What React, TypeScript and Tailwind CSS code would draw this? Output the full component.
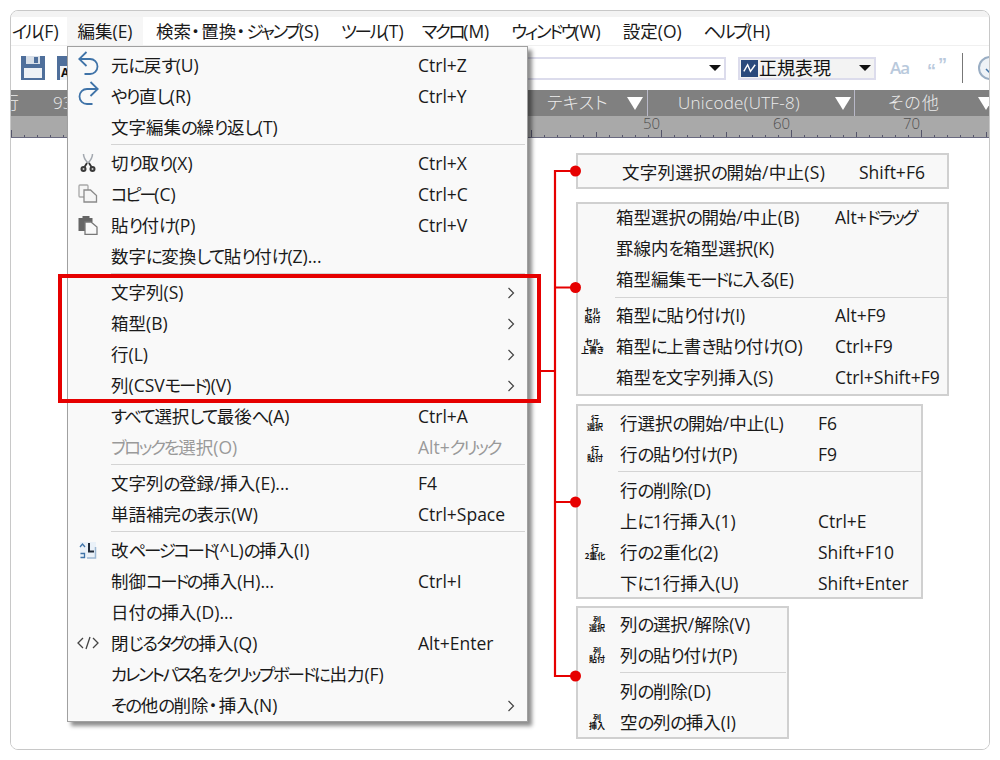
import React from "react";

const FONT = "[font-family:'Open_Sans','Noto_Sans_CJK_JP',sans-serif] [font-feature-settings:'palt']";

/* Hiragana and katakana set narrower than kanji, as in the reference's UI font */
function Txt({ s }: { s: string }) {
  const parts = s.split(/([\u3041-\u3096]+|[\u30a1-\u30fa\u30fc]+|・)/);
  return (
    <>
      {parts.map((p, i) => {
        if (!p) return null;
        if (p === "・") return <span key={i} className="tracking-[1.5px]">{p}</span>;
        if (/^[\u3041-\u3096]/.test(p)) return <span key={i} className="tracking-[-1.5px]">{p}</span>;
        if (/^[\u30a1-\u30fa\u30fc]/.test(p)) return <span key={i} className="tracking-[-2.300px]">{p}</span>;
        return <span key={i}>{p}</span>;
      })}
    </>
  );
}

function Undo({ flip }: { flip?: boolean }) {
  return (
    <svg width="21" height="24" viewBox="0 0 21 24" fill="none" stroke="#3f73a8" strokeWidth="1.800" className="-translate-y-[2px]" style={flip ? { transform: "scaleX(-1) translateY(-1px)" } : undefined}>
      <path d="M8.500 1 1.200 8l7.300 7" />
      <path d="M1.200 8H12a7.500 7.500 0 0 1 0 15H6.500" />
    </svg>
  );
}
function Scissors() {
  return (
    <svg width="18" height="20" viewBox="0 0 18 20" fill="none">
      <path d="M4.500 1c0 4 2.500 7 4.500 9M13.500 1c0 4-2.500 7-4.500 9" stroke="#a4a9b0" strokeWidth="1.500" />
      <path d="M8 10 5.500 14M10 10l2.500 4" stroke="#333" strokeWidth="1.800" />
      <circle cx="4.500" cy="16" r="3" fill="#3a3a3a" />
      <circle cx="13.500" cy="16" r="3" fill="#3a3a3a" />
      <circle cx="4.500" cy="16" r="1" fill="#ccc" />
      <circle cx="13.500" cy="16" r="1" fill="#ccc" />
    </svg>
  );
}
function Copy() {
  return (
    <svg width="20" height="19" viewBox="0 0 20 19" fill="#f5f5f5" stroke="#a8a8a8" strokeWidth="1.300">
      <path d="M1 2a1 1 0 0 1 1-1h7a1 1 0 0 1 1 1v10a1 1 0 0 1-1 1H2a1 1 0 0 1-1-1z" />
      <path d="M6 6h6.500l6 5.500v6.500H6z" stroke="#8a8a8a" />
    </svg>
  );
}
function Paste() {
  return (
    <svg width="20" height="20" viewBox="0 0 20 20">
      <path d="M0.500 3h4V1h7v2h3v4H8v9H0.500z" fill="#666" />
      <path d="M7 7h6l6 5v7.500H7z" fill="#f8f8f8" stroke="#777" strokeWidth="1.300" />
    </svg>
  );
}
function PageBreak() {
  return (
    <svg width="18" height="18" viewBox="0 0 18 18" fill="none">
      <path d="M1 1h16v16H1z" fill="#eaf1f8" />
      <path d="M1 6 3.500 3 6 6" stroke="#3f73a8" strokeWidth="1.300" />
      <path d="M10 2v8.500h5" stroke="#1f2937" strokeWidth="2" />
      <path d="M1.500 12.500h4v4h-4" stroke="#3f73a8" strokeWidth="1.300" />
      <path d="M16.500 6v11H8" stroke="#9db8d3" strokeWidth="1.500" />
    </svg>
  );
}
function Tag() {
  return (
    <svg width="22" height="14" viewBox="0 0 22 14" fill="none" stroke="#444" strokeWidth="1.300">
      <path d="M6 2 1 7l5 5M16 2l5 5-5 5M13 1 9 13" />
    </svg>
  );
}
function Chevron() {
  return (
    <svg width="8" height="12" viewBox="0 0 8 12" fill="none" stroke="#444" strokeWidth="1.200">
      <path d="m1.500 1 5 5-5 5" />
    </svg>
  );
}
function Mini({ s }: { s: string }) {
  return (
    <div className="whitespace-pre-line text-center text-[8px] leading-[8px] font-bold text-[#111] [font-family:'Noto_Sans_CJK_JP',sans-serif]">
      {s}
    </div>
  );
}

type Item = { t?: string; k?: string; icon?: React.ReactNode; sub?: boolean; off?: boolean; sep?: boolean };

const menu: Item[] = [
  { t: "元に戻す(U)", k: "Ctrl+Z", icon: <Undo /> },
  { t: "やり直し(R)", k: "Ctrl+Y", icon: <Undo flip /> },
  { t: "文字編集の繰り返し(T)" },
  { sep: true },
  { t: "切り取り(X)", k: "Ctrl+X", icon: <Scissors /> },
  { t: "コピー(C)", k: "Ctrl+C", icon: <Copy /> },
  { t: "貼り付け(P)", k: "Ctrl+V", icon: <Paste /> },
  { t: "数字に変換して貼り付け(Z)..." },
  { sep: true },
  { t: "文字列(S)", sub: true },
  { t: "箱型(B)", sub: true },
  { t: "行(L)", sub: true },
  { t: "列(CSVモード)(V)", sub: true },
  { t: "すべて選択して最後へ(A)", k: "Ctrl+A" },
  { t: "ブロックを選択(O)", k: "Alt+クリック", off: true },
  { sep: true },
  { t: "文字列の登録/挿入(E)...", k: "F4" },
  { t: "単語補完の表示(W)", k: "Ctrl+Space" },
  { sep: true },
  { t: "改ページコード(^L)の挿入(I)", icon: <PageBreak /> },
  { t: "制御コードの挿入(H)...", k: "Ctrl+I" },
  { t: "日付の挿入(D)..." },
  { t: "閉じるタグの挿入(Q)", k: "Alt+Enter", icon: <Tag /> },
  { t: "カレントパス名をクリップボードに出力(F)" },
  { t: "その他の削除・挿入(N)", sub: true },
];

const p1: Item[] = [{ t: "文字列選択の開始/中止(S)", k: "Shift+F6" }];
const p2: Item[] = [
  { t: "箱型選択の開始/中止(B)", k: "Alt+ドラッグ" },
  { t: "罫線内を箱型選択(K)" },
  { t: "箱型編集モードに入る(E)" },
  { sep: true },
  { t: "箱型に貼り付け(I)", k: "Alt+F9", icon: <Mini s={"セル\n貼付"} /> },
  { t: "箱型に上書き貼り付け(O)", k: "Ctrl+F9", icon: <Mini s={"セル\n上書き"} /> },
  { t: "箱型を文字列挿入(S)", k: "Ctrl+Shift+F9" },
];
const p3: Item[] = [
  { t: "行選択の開始/中止(L)", k: "F6", icon: <Mini s={"行\n選択"} /> },
  { t: "行の貼り付け(P)", k: "F9", icon: <Mini s={"行\n貼付"} /> },
  { sep: true },
  { t: "行の削除(D)" },
  { t: "上に1行挿入(1)", k: "Ctrl+E" },
  { t: "行の2重化(2)", k: "Shift+F10", icon: <Mini s={"行\n2重化"} /> },
  { t: "下に1行挿入(U)", k: "Shift+Enter" },
];
const p4: Item[] = [
  { t: "列の選択/解除(V)", icon: <Mini s={"列\n選択"} /> },
  { t: "列の貼り付け(P)", icon: <Mini s={"列\n貼付"} /> },
  { sep: true },
  { t: "列の削除(D)" },
  { t: "空の列の挿入(I)", icon: <Mini s={"列\n挿入"} /> },
];

function Rows({ items, gutter, label, sepClass }: { items: Item[]; gutter: string; label: string; sepClass: string }) {
  return (
    <>
      {items.map((it, i) =>
        it.sep ? (
          <div key={i} className={"h-[5px] " + sepClass}>
            <div className="h-px w-full bg-[#d4d4d4]" />
          </div>
        ) : (
          <div key={i} className={"h-[31px] flex items-center text-[17.500px] whitespace-nowrap " + (it.off ? "text-[#9a9a9a]" : "text-[#1a1a1a]")}>
            <div className={"shrink-0 flex items-center justify-center -translate-y-px " + gutter}>{it.icon}</div>
            <div className={"shrink-0 " + label}>
              <Txt s={it.t ?? ""} />
            </div>
            <div className="flex-1">{it.k && <Txt s={it.k} />}</div>
            {it.sub && (
              <div className="w-[20px] shrink-0 flex">
                <Chevron />
              </div>
            )}
          </div>
        )
      )}
    </>
  );
}

function Caret() {
  return <div className="w-0 h-0 border-x-[6px] border-x-transparent border-t-[6px] border-t-[#111]" />;
}
function HeadTri() {
  return <div className="w-0 h-0 border-x-[8.500px] border-x-transparent border-t-[13px] border-t-white" />;
}

function Ruler() {
  const ticks = [];
  for (let x = 0; x < 980; x += 13) {
    const n = Math.round(x / 13);
    const h = n % 10 === 0 ? 7 : n % 5 === 0 ? 5 : 2;
    ticks.push(<line key={x} x1={x + 0.5} x2={x + 0.5} y1={21 - h} y2={21} stroke="#55556a" />);
  }
  return (
    <svg width="978" height="22" className="block">
      {ticks}
      <line x1="0" x2="978" y1="21.500" y2="21.500" stroke="#6a6a80" />
    </svg>
  );
}

export default function App() {
  return (
    <div className={"relative w-[1000px] h-[760px] bg-white overflow-hidden " + FONT}>
      <div className="pt-[10px] px-[10px]">
        <div className="h-[740px] rounded-[8px] border border-[#c8c8c8] overflow-hidden flex flex-col">
          <div className="h-[6px] bg-[#f3f3f3] shrink-0" />
          {/* menu bar */}
          <div className="h-[29px] shrink-0 flex items-center text-[17.500px] text-[#1a1a1a] whitespace-nowrap border-b border-[#f0f0f0]">
            <div className="w-[56px] flex justify-start pl-[1px] shrink-0"><Txt s="イル(F)" /></div>
            <div className="w-[76px] self-stretch flex items-center justify-center bg-[#f6f6f6] shrink-0">編集(E)</div>
            <div className="ml-[13px] flex gap-[22px]">
              <span><Txt s="検索・置換・ジャンプ(S)" /></span>
              <span className="-mr-[4px]"><Txt s="ツール(T)" /></span>
              <span><Txt s="マクロ(M)" /></span>
              <span><Txt s="ウィンドウ(W)" /></span>
              <span>設定(O)</span>
              <span><Txt s="ヘルプ(H)" /></span>
            </div>
          </div>
          {/* toolbar */}
          <div className="h-[44px] shrink-0 flex items-center pl-[10px] overflow-hidden">
            <svg width="24" height="24" viewBox="0 0 24 24" className="shrink-0">
              <path d="M0 0h24v24H0z" fill="#4f6f9b" />
              <path d="M5 0h14v8H5z" fill="#d8dfe8" />
              <path d="M13 1h4v6h-4z" fill="#4f6f9b" />
              <path d="M3 12h18v10H3z" fill="#eef1f5" />
            </svg>
            <svg width="24" height="24" viewBox="0 0 24 24" className="shrink-0 ml-[12px]">
              <path d="M0 0h24v24H0z" fill="#4f6f9b" />
              <path d="M3 10h18v14H3z" fill="#eef1f5" />
              <text x="4" y="21" fontSize="12" fontWeight="700" fill="#111">A</text>
            </svg>
            <div className="ml-[441px] w-[204px] h-[23px] shrink-0 border-2 border-[#dcdcec] bg-white flex items-center justify-end pr-[3px]">
              <Caret />
            </div>
            <div className="ml-[12px] w-[138px] h-[23px] shrink-0 border-2 border-[#dcdcec] bg-[#f3f3f3] flex items-center pl-[1px] pr-[3px]">
              <svg width="17" height="17" viewBox="0 0 18 18" className="shrink-0">
                <path d="M0 0h18v18H0z" fill="#2a4a7c" />
                <path d="M3 12 7 5l3 7 5-7" fill="none" stroke="#fff" strokeWidth="1.500" />
              </svg>
              <span className="ml-[1px] flex-1 text-[18px] text-[#111]">正規表現</span>
              <Caret />
            </div>
            <span className="ml-[14px] w-[20px] text-[17px] font-semibold tracking-[-1px] text-[#b9c9dc] shrink-0">Aa</span>
            <div className="ml-[17px] w-[20px] flex shrink-0 text-[18px] leading-none font-bold text-[#b9c9dc] [font-family:'Liberation_Sans',sans-serif]">
              <span className="translate-y-[3px]">“</span>
              <span className="ml-[2px] -translate-y-[3px]">”</span>
            </div>
            <div className="ml-[15px] w-px h-[30px] bg-[#777] shrink-0" />
            <svg width="24" height="24" viewBox="0 0 24 24" className="ml-[15px] shrink-0" fill="#eef2f7" stroke="#9aaec4" strokeWidth="2">
              <circle cx="12" cy="12" r="11" />
              <path d="M12 6v11M8 13l4 4 4-4" fill="none" stroke="#3f73a8" strokeWidth="1.500" />
            </svg>
          </div>
          {/* status header */}
          <div className="h-[26px] shrink-0 bg-[#808080] flex items-center text-[17px] font-light text-[#ececec] whitespace-nowrap overflow-hidden">
            <div className="w-[42px] shrink-0 overflow-hidden">
              <span className="block ml-[-9px]">行</span>
            </div>
            <span className="w-[489px] shrink-0">93</span>
            <div className="w-[106px] h-full shrink-0 flex items-center border-r border-[#b8b8c8] pl-[5px]">
              <span className="w-[80px] tracking-[0.500px]">テキスト</span>
              <HeadTri />
            </div>
            <div className="w-[207px] h-full shrink-0 flex items-center border-r border-[#b8b8c8] pl-[30px]">
              <span className="w-[157px] tracking-[0.300px]">Unicode(UTF-8)</span>
              <HeadTri />
            </div>
            <div className="flex-1 h-full flex items-center pl-[33px]">
              <span className="w-[90px] tracking-[1px]">その他</span>
              <HeadTri />
            </div>
          </div>
          {/* ruler */}
          <div className="h-[22px] shrink-0 bg-[#a9a9a9] relative">
            <Ruler />
            <span className="absolute left-[632px] top-[-4px] text-[15px] font-light text-[#505050]">50</span>
            <span className="absolute left-[762px] top-[-4px] text-[15px] font-light text-[#505050]">60</span>
            <span className="absolute left-[892px] top-[-4px] text-[15px] font-light text-[#505050]">70</span>
          </div>
          <div className="flex-1 bg-white" />
        </div>
      </div>

      {/* edit menu */}
      <div className="absolute left-[67px] top-[46px] w-[461px] pt-[3px] bg-[#f9f9f9] border border-[#a0a0a0] shadow-[4px_4px_4px_rgba(0,0,0,0.45)]">
        <Rows items={menu} gutter="w-[43px] pr-[3px]" label="w-[307px]" sepClass="pl-[43px] pr-[2px] pt-px" />
      </div>

      {/* callout panels */}
      <div className="absolute left-[576px] top-[153px] flex flex-col items-start">
        <div className="w-[373px] h-[36px] bg-[#f8f8f8] border-2 border-[#d0d0d0]">
          <div className="mt-[2px]">
            <Rows items={p1} gutter="w-[44px]" label="w-[237px] tracking-[0.300px]" sepClass="" />
          </div>
        </div>
        <div className="mt-[13px] w-[373px] h-[194px] bg-[#f8f8f8] border-2 border-[#d0d0d0]">
          <div className="mt-[-2px]">
            <Rows items={p2} gutter="w-[38px] pr-[9px]" label="w-[219px]" sepClass="pl-[37px] pt-[2px]" />
          </div>
        </div>
        <div className="mt-[8px] w-[347px] h-[195px] bg-[#f8f8f8] border-2 border-[#d0d0d0]">
          <div className="mt-[2px]">
            <Rows items={p3} gutter="w-[42px] pr-[8px]" label="w-[198px]" sepClass="pl-[40px] pt-px" />
          </div>
        </div>
        <div className="mt-[7px] w-[213px] h-[133px] bg-[#f8f8f8] border-2 border-[#d0d0d0]">
          <div className="mt-[1px]">
            <Rows items={p4} gutter="w-[42px] pr-[4px]" label="w-[160px]" sepClass="pl-[42px] pr-[1px] pt-px" />
          </div>
        </div>
      </div>

      {/* red highlight + connector */}
      <div className="absolute left-[58px] top-[274px] w-[483px] h-[129px] border-[4px] border-[#e60000]" />
      <svg width="1000" height="760" className="absolute left-0 top-0 pointer-events-none">
        <path d="M541 371h14M555 170v507M555 171h20M555 287.500h20M555 502h20M555 676h20" fill="none" stroke="#e60000" strokeWidth="2.200" />
        <circle cx="575.500" cy="171" r="5.500" fill="#e60000" />
        <circle cx="575.500" cy="287.500" r="5.500" fill="#e60000" />
        <circle cx="575.500" cy="502" r="5.500" fill="#e60000" />
        <circle cx="575.500" cy="676" r="5.500" fill="#e60000" />
      </svg>
    </div>
  );
}
